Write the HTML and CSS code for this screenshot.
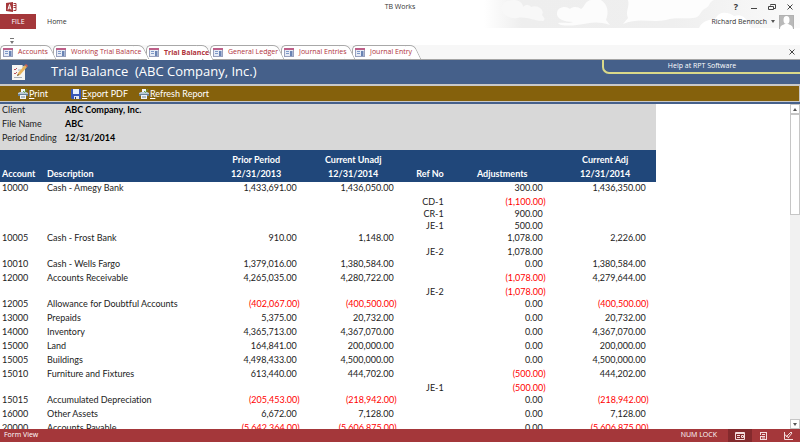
FILE: index.html
```html
<!DOCTYPE html>
<html lang="en">
<head>
  <meta charset="UTF-8">
  <meta name="viewport" content="width=device-width,initial-scale=1">
  <title>TB Works</title>
  <link rel="stylesheet" href="styles.css">
</head>
<body>

  <!-- shared icons -->
  <svg class="defs" aria-hidden="true">
    <symbol id="form" viewBox="0 0 10 9">
      <rect x=".5" y=".5" width="9" height="8" fill="#e6ebf5" stroke="#98a0bd"/>
      <rect x="0" y="0" width="10" height="2" fill="#bd5f88"/>
      <path d="M2 3.500h3M2 5.500h3" stroke="#7f9ac8"/>
      <rect x="6" y="3" width="2.500" height="5" fill="#6a84b4"/>
    </symbol>
    <symbol id="printer" viewBox="0 0 10 10">
      <rect x="3" y="0" width="4" height="4" fill="#f2f6fa"/>
      <path d="M0 4l2-1h6l2 1v3H0z" fill="#b9cad6"/>
      <path d="M0 5h10v2H0z" fill="#6a8398"/>
      <path d="M2 6h6v4H2z" fill="#eef3f7"/>
      <path d="M3 8h4" stroke="#6f8598"/>
      <path d="M5 2l1.500 1.500L9 0" fill="none" stroke="#5fa548"/>
    </symbol>
  </svg>

  <!-- TITLE BAR + RIBBON -->
  <header class="top">
    <svg class="clouds" viewBox="0 0 316 28" preserveAspectRatio="none" aria-hidden="true">
      <defs><linearGradient id="fade"><stop offset="0" stop-color="#fff"/><stop offset=".12" stop-color="#eee"/><stop offset=".6" stop-color="#efefef"/><stop offset="1" stop-color="#fafafa"/></linearGradient></defs>
      <rect width="316" height="28" fill="url(#fade)"/>
      <path d="M18 11C16 4 22 0 30 0c6 0 9 4 9 7 3-3 7-2 8 0 7-3 14 3 11 8 2 3 4 4 1 6-10 0-16-5-26-3-7 1-12-2-15-7z" fill="#f8f8f8"/>
      <path d="M73 13c0-6 9-8 13-4 3-3 9-2 11 0 3-1 4-9 11-9h9c7 5 8 12 5 20l4 5c-15-5-22-1-33 0-8 1-17 1-19-2 5-1 11 1 15-1-8 0-17-3-16-9z" fill="#fcfcfc"/>
      <path d="M139 24l5-6c-3-7 2-11 0-18h86c-6 3-3 5-8 8-7 3-4 9-13 10-9 1-17-1-27 2-15 3-27-3-43 4z" fill="#fdfdfd"/>
      <path d="M215 28c4-9 13-8 17-10 4-8 14-5 18-2 8-3 13 2 17 12z" fill="#fff"/>
    </svg>
    <div class="titlebar">
      <svg class="app-icon" viewBox="0 0 11 10" aria-hidden="true">
        <path d="M0 1l7-1v10L0 9z" fill="#a4373a"/>
        <path d="M2 7.500L3.500 2.500 5 7.500M2.500 6h2" fill="none" stroke="#fff"/>
        <path d="M7.500 1.500H10v7H7.500M7.500 3.500H10M7.500 5.500H10" fill="none" stroke="#a4373a"/>
      </svg>
      <h1 class="app-name">TB Works</h1>
      <div class="win-btns">
        <button type="button" aria-label="Help">?</button>
        <button type="button" aria-label="Minimize"><svg viewBox="0 0 8 8"><path d="M1 5.500h6"/></svg></button>
        <button type="button" aria-label="Restore"><svg viewBox="0 0 8 8"><path d="M2.500 2.500v-1h5v4h-2M.5 3.500h5v3h-5z"/></svg></button>
        <button type="button" aria-label="Close"><svg viewBox="0 0 8 8"><path d="M1.500 1.500l5 5M6.500 1.500l-5 5"/></svg></button>
      </div>
    </div>
    <nav class="ribbon">
      <button type="button" class="file">FILE</button>
      <button type="button" class="home">Home</button>
      <button type="button" class="user">Richard Bennoch <span class="caret"></span>
        <svg viewBox="0 0 15 14" aria-hidden="true"><rect width="15" height="14" fill="#b1b1b1"/><path d="M1 1h13v12H1z" fill="#b9b9b9"/><ellipse cx="7.500" cy="5" rx="3" ry="4" fill="#fff"/><path d="M1 14c0-4 3-4 5-5h3c2 1 5 1 5 5z" fill="#fff"/></svg>
      </button>
    </nav>
    <div class="qat"><button type="button" aria-label="Customize toolbar"><span class="caret"></span></button></div>
  </header>

  <!-- DOCUMENT TABS -->
  <nav class="tabs">
    <button type="button" class="tab w1"><svg class="ico"><use href="#form"/></svg>Accounts</button>
    <button type="button" class="tab w2"><svg class="ico"><use href="#form"/></svg>Working Trial Balance</button>
    <button type="button" class="tab w3 active"><svg class="ico"><use href="#form"/></svg>Trial Balance</button>
    <button type="button" class="tab w4"><svg class="ico"><use href="#form"/></svg>General Ledger</button>
    <button type="button" class="tab w4"><svg class="ico"><use href="#form"/></svg>Journal Entries</button>
    <button type="button" class="tab w5"><svg class="ico"><use href="#form"/></svg>Journal Entry</button>
    <button type="button" class="close-tab" aria-label="Close tab"><svg viewBox="0 0 8 8"><path d="M1.500 1.500l5 5M6.500 1.500l-5 5"/></svg></button>
  </nav>

  <!-- FORM HEADER -->
  <div class="form-head">
    <svg class="note" viewBox="0 0 16 17" aria-hidden="true">
      <path d="M0 1h10l3 3v12H0z" fill="#f5f5f3"/>
      <path d="M10 1v3h3z" fill="#c9d0d8"/>
      <path d="M2 5l1 1 2-2M2 9l1 1 2-2" fill="none" stroke="#b9515b"/>
      <path d="M2 13.500h8M6 6h3" stroke="#a8b0ba"/>
      <path d="M5 12l1-3 7-8 2 2-7 8z" fill="#e7b35b"/>
      <path d="M13 1l1-1 2 2-1 1z" fill="#d85c50"/>
      <path d="M5 12l1-2 1 1z" fill="#333"/>
    </svg>
    <h2>Trial Balance&nbsp; (ABC Company, Inc.)</h2>
    <a class="help" href="#">Help at RPT Software</a>
  </div>
  <div class="toolbar">
    <button type="button" class="print"><svg><use href="#printer"/></svg><span><u>P</u>rint</span></button>
    <button type="button" class="export"><svg viewBox="0 0 10 10"><path d="M0 0h10v10H1L0 9z" fill="#3957b5"/><path d="M2 0h6v5H2z" fill="#e8f0fb"/><path d="M3 7h5v3H3z" fill="#dfe5ef"/><path d="M4 8h1v2H4z" fill="#26366f"/></svg><span><u>E</u>xport PDF</span></button>
    <button type="button" class="refresh"><svg><use href="#printer"/></svg><span><u>R</u>efresh Report</span></button>
  </div>

  <!-- REPORT -->
  <main class="view">
    <div class="sheet">
      <dl class="meta">
        <dt>Client</dt><dd>ABC Company, Inc.</dd>
        <dt>File Name</dt><dd>ABC</dd>
        <dt>Period Ending</dt><dd>12/31/2014</dd>
      </dl>
      <table class="report">
        <colgroup><col class="c-acct"><col><col class="c-num"><col class="c-num"><col class="c-ref"><col class="c-num"><col class="c-last"></colgroup>
        <thead>
          <tr><th>Account</th><th>Description</th><th>Prior Period<br>12/31/2013</th><th>Current Unadj<br>12/31/2014</th><th>Ref No</th><th>Adjustments</th><th>Current Adj<br>12/31/2014</th></tr>
        </thead>
        <tbody>
          <tr><td>10000</td><td>Cash - Amegy Bank</td><td>1,433,691.00</td><td>1,436,050.00</td><td></td><td>300.00</td><td>1,436,350.00</td></tr>
          <tr class="sub"><td></td><td></td><td></td><td></td><td>CD-1</td><td class="neg">(1,100.00)</td><td></td></tr>
          <tr class="sub"><td></td><td></td><td></td><td></td><td>CR-1</td><td>900.00</td><td></td></tr>
          <tr class="sub"><td></td><td></td><td></td><td></td><td>JE-1</td><td>500.00</td><td></td></tr>
          <tr><td>10005</td><td>Cash - Frost Bank</td><td>910.00</td><td>1,148.00</td><td></td><td>1,078.00</td><td>2,226.00</td></tr>
          <tr class="sub"><td></td><td></td><td></td><td></td><td>JE-2</td><td>1,078.00</td><td></td></tr>
          <tr><td>10010</td><td>Cash - Wells Fargo</td><td>1,379,016.00</td><td>1,380,584.00</td><td></td><td>0.00</td><td>1,380,584.00</td></tr>
          <tr><td>12000</td><td>Accounts Receivable</td><td>4,265,035.00</td><td>4,280,722.00</td><td></td><td class="neg">(1,078.00)</td><td>4,279,644.00</td></tr>
          <tr class="sub"><td></td><td></td><td></td><td></td><td>JE-2</td><td class="neg">(1,078.00)</td><td></td></tr>
          <tr><td>12005</td><td>Allowance for Doubtful Accounts</td><td class="neg">(402,067.00)</td><td class="neg">(400,500.00)</td><td></td><td>0.00</td><td class="neg">(400,500.00)</td></tr>
          <tr><td>13000</td><td>Prepaids</td><td>5,375.00</td><td>20,732.00</td><td></td><td>0.00</td><td>20,732.00</td></tr>
          <tr><td>14000</td><td>Inventory</td><td>4,365,713.00</td><td>4,367,070.00</td><td></td><td>0.00</td><td>4,367,070.00</td></tr>
          <tr><td>15000</td><td>Land</td><td>164,841.00</td><td>200,000.00</td><td></td><td>0.00</td><td>200,000.00</td></tr>
          <tr><td>15005</td><td>Buildings</td><td>4,498,433.00</td><td>4,500,000.00</td><td></td><td>0.00</td><td>4,500,000.00</td></tr>
          <tr><td>15010</td><td>Furniture and Fixtures</td><td>613,440.00</td><td>444,702.00</td><td></td><td class="neg">(500.00)</td><td>444,202.00</td></tr>
          <tr class="sub"><td></td><td></td><td></td><td></td><td>JE-1</td><td class="neg">(500.00)</td><td></td></tr>
          <tr><td>15015</td><td>Accumulated Depreciation</td><td class="neg">(205,453.00)</td><td class="neg">(218,942.00)</td><td></td><td>0.00</td><td class="neg">(218,942.00)</td></tr>
          <tr><td>16000</td><td>Other Assets</td><td>6,672.00</td><td>7,128.00</td><td></td><td>0.00</td><td>7,128.00</td></tr>
          <tr><td>20000</td><td>Accounts Payable</td><td class="neg">(5,642,364.00)</td><td class="neg">(5,606,875.00)</td><td></td><td>0.00</td><td class="neg">(5,606,875.00)</td></tr>
        </tbody>
      </table>
    </div>
    <div class="scroll">
      <button type="button" aria-label="Scroll up"><span class="caret up"></span></button>
      <div class="track"><div class="thumb"></div></div>
      <button type="button" aria-label="Scroll down"><span class="caret"></span></button>
    </div>
  </main>

  <!-- STATUS BAR -->
  <footer class="status">
    <span class="mode">Form View</span>
    <span class="lock">NUM LOCK</span>
    <button type="button" class="on" aria-label="Form View"><svg viewBox="0 0 10 8"><path d="M.5.5h9v7h-9zM0 1.500h10M2 3.500h3M2 5.500h3M6.500 3.500h2v2h-2z"/></svg></button>
    <button type="button" aria-label="Layout View"><svg viewBox="0 0 10 8"><path d="M1 .5h7M1 7.500h7M1.500 0v3M1.500 5v3M7.500 0v8M3 2.500h3M1 4.500h5M3 6h3"/></svg></button>
    <button type="button" aria-label="Design View"><svg viewBox="0 0 10 8"><path d="M1.500 0v7.500H10M1 2l5 4M3 5l5-5 1 1-4 5"/></svg></button>
  </footer>

</body>
</html>
```
FILE: styles.css
```css
*,*::before,*::after{margin:0;padding:0;box-sizing:border-box}
html,body{height:100%;overflow:hidden}
body{
  display:flex;
  flex-direction:column;
  background:#fff;
  color:#333;
  font:7px/14px "Open Sans","Noto Sans",sans-serif;
}
button{
  border:none;
  background:none;
  color:inherit;
  font:inherit;
}
.defs{position:absolute;width:0;height:0}
.caret{
  display:inline-block;
  border:2px solid transparent;
  border-top:3px solid #555;
  border-bottom:0;
}
.caret.up{border-top:0;border-bottom:3px solid #555}

/* ===== TITLE BAR + RIBBON ===== */
.top{position:relative;flex:none}
.clouds{
  position:absolute;
  top:0;right:0;
  width:316px;height:28px;
}
.titlebar{
  position:relative;
  display:flex;
  align-items:center;
  justify-content:space-between;
  height:14px;
  padding:0 6px;
}
.app-icon{width:11px;height:10px}
.app-name{
  position:absolute;
  left:0;right:0;
  text-align:center;
  font-size:7px;
  font-weight:400;
}
.win-btns{position:relative;display:flex;gap:10px}
.win-btns button{width:8px;height:14px;font-weight:700;font-size:9px}
.win-btns svg,.close-tab svg{
  display:block;
  width:8px;height:8px;
  fill:none;
  stroke:#444;
}
.win-btns svg{margin:auto}
.ribbon{
  position:relative;
  display:flex;
  height:15px;
  line-height:15px;
}
.file{width:36px;background:#a4373a;color:#fff}
.home{margin-left:11px}
.user{
  display:flex;
  align-items:center;
  gap:4px;
  margin-left:auto;
  padding-right:6px;
}
.user svg{width:15px;height:14px}
.qat{height:16px;padding:9px 10px 0}
.qat button{
  display:block;
  width:4px;height:6px;
  border-top:1px solid #777;
  line-height:5px;
}
.qat .caret{display:block;margin-top:1px;border-top-color:#777}

/* ===== TABS ===== */
.tabs{
  position:relative;
  z-index:0;
  display:flex;
  flex:none;
  height:15px;
  background:#f7f7f7;
  border-bottom:1px solid #a5a5a5;
}
.tab{
  position:relative;
  display:flex;
  align-items:center;
  gap:5px;
  height:14px;
  padding-left:3px;
  color:#b0343c;
  white-space:nowrap;
}
.tab::before,.tab::after{
  content:"";
  position:absolute;
  top:0;bottom:0;
  border-top:1px solid #a8a8a8;
  background:#fff;
}
.tab::before{
  z-index:-2;
  left:0;right:8px;
  border-left:1px solid #a8a8a8;
  border-radius:5px 0 0 0;
}
/* slanted right edge, drawn over the next tab */
.tab::after{
  z-index:-1;
  right:0;
  width:10px;
  border-right:1px solid #a8a8a8;
  border-radius:0 5px 0 0;
  transform:skewX(26deg);
}
.ico{flex:none;width:10px;height:9px}
.w1{width:53px}
.w2{width:93px}
.w3{width:64px}
.w4{width:71px}
.w5{width:66px}
.active{height:15px;font-weight:700}
.close-tab{margin-left:auto;padding-right:4px}

/* ===== FORM HEADER ===== */
.form-head{
  display:flex;
  flex:none;
  align-items:flex-start;
  height:24px;
  padding-left:12px;
  background:#45608a;
  color:#fff;
}
.note{width:16px;height:17px;margin-top:4px}
.form-head h2{
  margin-left:23px;
  font-size:13px;
  font-weight:400;
  line-height:22px;
}
.help{
  width:198px;
  height:14px;
  margin-left:auto;
  border:solid #d9d98a;
  border-width:0 0 2px 2px;
  border-bottom-left-radius:7px;
  color:#fff;
  line-height:11px;
  text-align:center;
  text-decoration:none;
}
.toolbar{
  display:flex;
  flex:none;
  height:18px;
  padding-left:18px;
  border:solid #c9c9c9;
  border-width:2px 1px 1px 0;
  background:#85610c;
  color:#fff;
  font-family:Lato,Carlito,sans-serif;
  font-size:9px;
}
.toolbar button{
  display:flex;
  align-items:center;
  gap:1px;
  height:15px;
}
.toolbar svg{width:10px;height:10px}
.print{width:53px}
.export{width:68px}

/* ===== REPORT ===== */
.view{
  display:flex;
  flex:1;
  min-height:0;
  border-top:2px solid #45608a;
  font-family:Lato,Carlito,sans-serif;
  font-size:9px;
  font-variant-ligatures:none;
  color:#222;
}
.sheet{flex:1;overflow:hidden}
.meta{
  display:grid;
  grid-template-columns:63px 1fr;
  grid-auto-rows:14px;
  width:83%;
  height:46px;
  padding:0 2px;
  background:#d8d8d8;
  line-height:12px;
}
.meta dd{font-weight:700;color:#000}
.report{
  width:83%;
  table-layout:fixed;
  border-collapse:collapse;
}
.c-acct{width:45px}
.c-num{width:97px}
.c-ref{width:52px}
.c-last{width:109px}
.report th{
  height:32px;
  padding:2px 0 1px 8px;
  background:#20477a;
  color:#fff;
  vertical-align:bottom;
}
.report th:nth-child(-n+2){padding-left:2px;text-align:left}
.report th:nth-child(5){padding-right:6px;padding-left:0;text-align:right}
.report th:last-child{padding-right:6px;padding-left:14px}
.report td{
  height:14px;
  padding:0 4px 2px 2px;
  line-height:12px;
  text-align:right;
  white-space:nowrap;
}
.report td:nth-child(-n+2){text-align:left}
.report td:nth-child(5){padding-right:6px}
.report td:last-child{padding-right:10px}
.report .sub td{height:12px;padding-bottom:0}
.report .neg{padding-right:1px;color:#f00}
.report .neg:last-child{padding-right:7px}

.scroll{
  display:flex;
  flex-direction:column;
  width:10px;
}
.scroll button{
  display:flex;
  align-items:center;
  justify-content:center;
  height:10px;
  border:1px solid #c6c6c6;
}
.track{flex:1;background:#f1f1f1}
.thumb{height:33%;background:#fff;border:1px solid #c6c6c6}

/* ===== STATUS BAR ===== */
.status{
  display:flex;
  flex:none;
  height:13px;
  padding-left:4px;
  background:#a4373a;
  color:#fff;
  line-height:12px;
}
.lock{margin:0 11px 0 auto}
.status button{width:24px;height:13px}
.status .on{background:#842a2d}
.status svg{
  display:block;
  width:10px;height:8px;
  margin:auto;
  fill:none;
  stroke:#f3dcdc;
}
```
